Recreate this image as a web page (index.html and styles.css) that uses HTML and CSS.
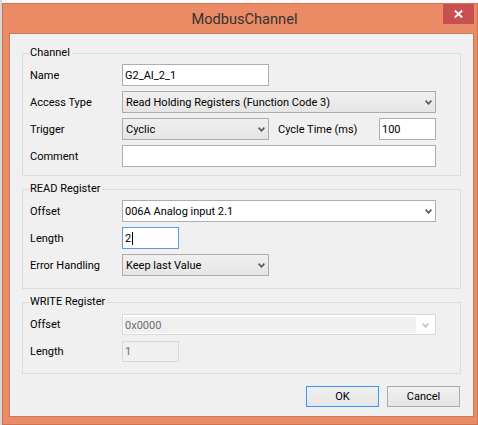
FILE: index.html
```html
<!DOCTYPE html>
<html>
<head>
<meta charset="utf-8">
<link rel="stylesheet" href="styles.css">
</head>
<body>
<div class="window">
  <div class="titlebar">
    <span class="title">ModbusChannel</span>
    <span class="close"><svg width="9" height="8" viewBox="0 0 9 8"><path d="M0.8 0.5 L8.2 7.5 M8.2 0.5 L0.8 7.5" stroke="#fff" stroke-width="1.8" fill="none"/></svg></span>
  </div>
  <div class="client">
    <div class="group g-tall">
      <span class="legend">Channel</span>
      <div class="row">
        <span class="lbl">Name</span>
        <div class="edit w147">G2_AI_2_1</div>
      </div>
      <div class="row">
        <span class="lbl">Access Type</span>
        <div class="combo w314"><span>Read Holding Registers (Function Code 3)</span><svg class="arrow" width="7" height="5" viewBox="0 0 7 5"><path d="M0.6 0.6 L3.5 3.8 L6.4 0.6" stroke="#5b5b5b" stroke-width="1.7" fill="none"/></svg></div>
      </div>
      <div class="row">
        <span class="lbl">Trigger</span>
        <div class="combo w147"><span>Cyclic</span><svg class="arrow" width="7" height="5" viewBox="0 0 7 5"><path d="M0.6 0.6 L3.5 3.8 L6.4 0.6" stroke="#5b5b5b" stroke-width="1.7" fill="none"/></svg></div>
        <span class="lbl cycle">Cycle Time (ms)</span>
        <div class="edit w57">100</div>
      </div>
      <div class="row">
        <span class="lbl">Comment</span>
        <div class="edit w314"></div>
      </div>
    </div>

    <div class="group g-tall g-read">
      <span class="legend">READ Register</span>
      <div class="row">
        <span class="lbl">Offset</span>
        <div class="edit combo-edit w314"><span>006A Analog input 2.1</span><svg class="arrow" width="7" height="5" viewBox="0 0 7 5"><path d="M0.6 0.6 L3.5 3.8 L6.4 0.6" stroke="#5b5b5b" stroke-width="1.7" fill="none"/></svg></div>
      </div>
      <div class="row">
        <span class="lbl">Length</span>
        <div class="edit focus w57"><span>2</span><span class="caret"></span></div>
      </div>
      <div class="row">
        <span class="lbl">Error Handling</span>
        <div class="combo w147"><span>Keep last Value</span><svg class="arrow" width="7" height="5" viewBox="0 0 7 5"><path d="M0.6 0.6 L3.5 3.8 L6.4 0.6" stroke="#5b5b5b" stroke-width="1.7" fill="none"/></svg></div>
      </div>
    </div>

    <div class="group g-write">
      <span class="legend">WRITE Register</span>
      <div class="row">
        <span class="lbl">Offset</span>
        <div class="dis-combo w314"><span class="dis-field">0x0000</span><span class="dis-btn"><svg width="7" height="5" viewBox="0 0 7 5"><path d="M0.6 0.6 L3.5 3.8 L6.4 0.6" stroke="#c2c2c2" stroke-width="1.7" fill="none"/></svg></span></div>
      </div>
      <div class="row">
        <span class="lbl">Length</span>
        <div class="dis-edit w57">1</div>
      </div>
    </div>

    <div class="buttons">
      <div class="btn default">OK</div>
      <div class="btn">Cancel</div>
    </div>
  </div>
</div>
</body>
</html>
```
FILE: styles.css
```css
* { box-sizing: border-box; }
html, body { margin: 0; padding: 0; }
body {
  width: 478px;
  height: 425px;
  overflow: hidden;
  padding: 3px 0 0 2px;
  background: linear-gradient(to right, #d6d6d6 0 2px, #fbfbfb 2px);
  font-family: Roboto, "Open Sans", sans-serif;
  font-size: 11px;
  color: #000;
}
.window {
  width: 476px;
  height: 422px;
  background: #ea8b65;
  border: 1px solid #cd7453;
  padding: 0 3px 7px 6px;
  display: flex;
  flex-direction: column;
}
.titlebar {
  height: 29px;
  display: flex;
  flex-shrink: 0;
}
.title {
  flex: 1;
  text-align: center;
  padding: 1px 0 0 37px;
  font-size: 14.6px;
  line-height: 28px;
  color: #333;
}
.close {
  width: 31px;
  height: 20px;
  background: #c75050;
  display: flex;
  align-items: center;
  justify-content: center;
}
.client {
  height: 384px;
  background: #f0f0f0;
  border: 1px solid #c47c60;
  padding: 0 12px;
  display: flex;
  flex-direction: column;
}
.group {
  border: 1px solid #dcdcdc;
  margin-top: 13px;
  padding: 0 0 8px 7px;
  display: flex;
  flex-direction: column;
}
.group:first-child { margin-top: 19px; }
.g-read { padding-bottom: 12px; }
.g-write { padding-bottom: 11px; }
.legend {
  align-self: flex-start;
  height: 16px;
  line-height: 16px;
  margin: -9px 0 0 -1px;
  padding: 0 2px 0 1px;
  background: #f0f0f0;
}
.row {
  display: flex;
  align-items: center;
  height: 22px;
  margin-top: 5px;
}
.legend + .row { margin-top: 3px; }
.g-write .row { height: 21px; margin-top: 6px; }
.g-write .legend + .row { margin-top: 4px; }
.lbl {
  width: 92px;
  flex-shrink: 0;
  white-space: nowrap;
}
.cycle { width: 101px; margin-left: 9px; }
.w147 { width: 147px; }
.w314 { width: 314px; }
.w57 { width: 57px; }
.edit, .combo, .dis-combo, .dis-edit {
  height: 100%;
  display: flex;
  align-items: center;
  flex-shrink: 0;
  white-space: nowrap;
}
.edit {
  border: 1px solid #abadb3;
  background: #fff;
  padding: 0 2px;
}
.edit.focus { border-color: #569de5; }
.caret {
  width: 1px;
  height: 13px;
  background: #000;
  margin-left: 1px;
}
.combo {
  border: 1px solid #acacac;
  background: linear-gradient(#f0f0f0, #e5e5e5);
  padding: 0 3px 0 3px;
  justify-content: space-between;
}
.combo-edit {
  justify-content: space-between;
  padding: 0 3px 0 2px;
}
.arrow { flex-shrink: 0; }
.dis-combo {
  border: 1px solid #d9d9d9;
  background: #fff;
  padding: 2px 0 1px 1px;
  align-items: stretch;
}
.dis-field {
  flex: 1;
  background: #f0f0f0;
  color: #6d6d6d;
  padding-left: 1px;
  display: flex;
  align-items: center;
}
.dis-btn {
  width: 19px;
  display: flex;
  align-items: center;
  justify-content: center;
}
.dis-edit {
  border: 1px solid #d9d9d9;
  background: #f0f0f0;
  color: #6d6d6d;
  padding: 0 2px;
}
.buttons {
  display: flex;
  justify-content: flex-end;
  gap: 8px;
  margin-top: 12px;
  padding-right: 1px;
}
.btn {
  width: 73px;
  height: 21px;
  border: 1px solid #acacac;
  background: linear-gradient(#f0f0f0, #e5e5e5);
  display: flex;
  align-items: center;
  justify-content: center;
}
.btn.default { border-color: #3399ff; }
```
